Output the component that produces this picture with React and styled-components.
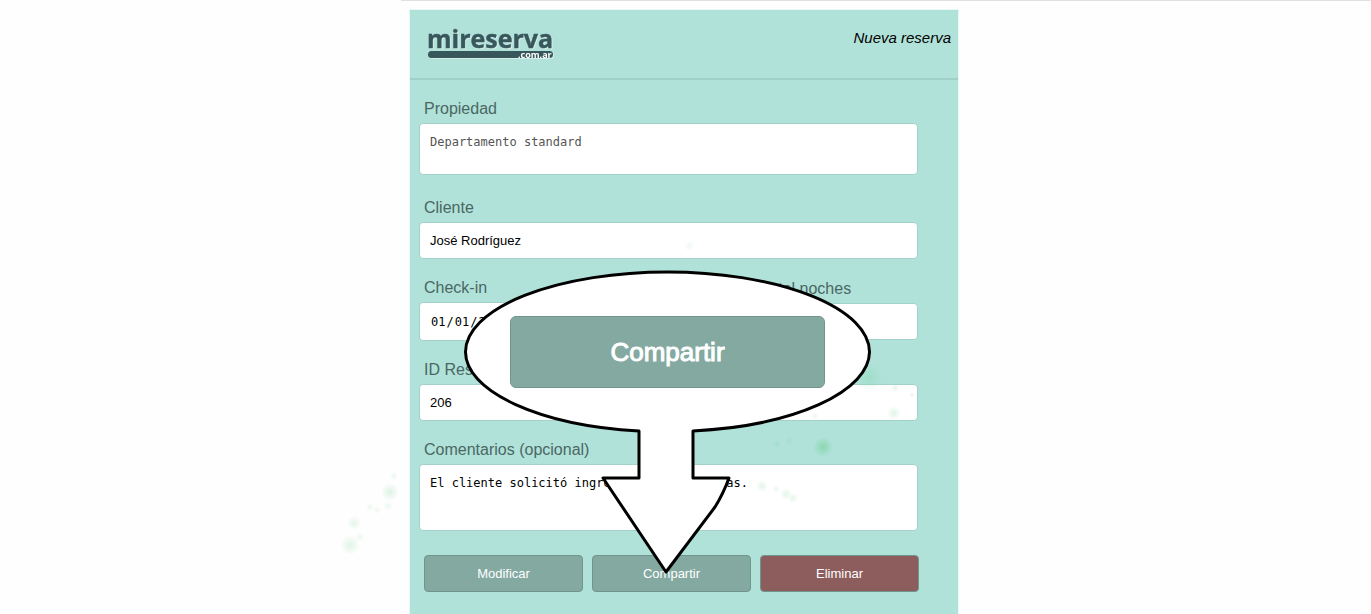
import React, { Component } from 'react';
import styled, { createGlobalStyle, css } from 'styled-components';

const GlobalStyle = createGlobalStyle`
    body {
        margin: 0;
        background: #fefefe;
        font-family: "Liberation Sans", Arial, sans-serif;
    }

    * {
        box-sizing: border-box;
    }
`

let Page = styled.div`
    display: flex;
    flex-direction: column;
    align-items: center;
    min-height: 100vh;
    padding-right: 3px;
`

let TopRule = styled.div`
    align-self: flex-end;
    width: calc(50% + 286px);
    height: 1px;
    margin-right: -3px;
    margin-bottom: 9px;
    background: #e0e0e0;
`

let Panel = styled.main`
    position: relative;
    flex: 1;
    width: 100%;
    max-width: 548px;
    background: #b0e2da;
    box-shadow: 0 0 0 1px #e8f8f4;
`

let Header = styled.header`
    display: flex;
    justify-content: space-between;
    height: 70px;
    padding: 14px 7px 0 16px;
    border-bottom: 2px solid #a0d0c8;
`

let Heading = styled.h1`
    margin: 4px 0 0;
    font-size: 15px;
    line-height: 20px;
    font-weight: normal;
    font-style: italic;
    color: #000;
`

let LogoMark = styled.svg`
    overflow: visible;
    font-family: "Open Sans", "Noto Sans", sans-serif;
    font-weight: 700;
    filter: drop-shadow(1px 1px 0 #d5eeea);
`

let Form = styled.form`
    display: flex;
    flex-direction: column;
    gap: 19px;
    padding: 19px 40px 22px 9px;
`

let Row = styled.div`
    display: grid;
    grid-template-columns: repeat(3, 1fr);
    align-items: center;
    gap: 7px;
`

let Field = styled.div`
    display: flex;
    flex-direction: column;
    gap: 4px;
    padding-bottom: ${props => props.$spaced ? '4px' : '0'};
`

let Label = styled.label`
    padding-left: 5px;
    font-size: 16px;
    line-height: 20px;
    color: #4b6762;
`

const box = css`
    display: block;
    width: 100%;
    margin: 0;
    padding: 0 10px;
    border: 1px solid #a2d2ca;
    border-radius: 4px;
    outline: none;
    background: #fff;
    color: #000;
`

let Input = styled.input`
    ${box}
    height: 37px;
    font: 13px "Liberation Sans", Arial, sans-serif;
`

let DateInput = styled.input`
    ${box}
    height: 39px;
    font: 12px "DejaVu Sans Mono", monospace;
`

let TextArea = styled.textarea`
    ${box}
    height: ${props => props.$tall ? '67px' : '52px'};
    padding-top: 10px;
    resize: none;
    overflow: hidden;
    font: 12px/16px "DejaVu Sans Mono", monospace;
    color: ${props => props.$muted ? '#555' : '#000'};
`

let Actions = styled.div`
    display: grid;
    grid-template-columns: repeat(3, 1fr);
    gap: 9px;
    margin: 5px -1px 0 5px;
`

let Button = styled.button`
    height: 37px;
    padding: 0;
    border: 1px solid #6f958d;
    border-radius: 4px;
    background: ${props => props.$danger ? '#8d5d5d' : '#83a9a1'};
    color: #fff;
    font: 13px "Liberation Sans", Arial, sans-serif;
`

/* balloon pointing at the share button */
let Callout = styled.div`
    position: absolute;
    top: 260px;
    left: 53px;
    width: 410px;
    height: 306px;
`

let BigButton = styled(Button)`
    position: absolute;
    top: 46px;
    left: 47px;
    width: 315px;
    height: 72px;
    border-radius: 6px;
    font-size: 26px;
    -webkit-text-stroke: 1px #fff;
`

let Balloon = styled.svg`
    display: block;
`

let Splashes = styled.svg`
    position: absolute;
    top: 0;
    left: -80px;
    pointer-events: none;
`

const splashes = [
  // x, y, radius, opacity
  [20, 535, 10, 0.2],
  [30, 527, 5, 0.12],
  [24, 513, 7, 0.18],
  [40, 497, 4, 0.12],
  [47, 500, 4, 0.12],
  [60, 482, 9, 0.22],
  [58, 496, 5, 0.12],
  [64, 466, 4, 0.14],
  [359, 236, 5, 0.12],
  [539, 367, 14, 0.22],
  [493, 437, 10, 0.5],
  [447, 434, 4, 0.2],
  [459, 431, 5, 0.15],
  [564, 403, 7, 0.2],
  [565, 378, 4, 0.2],
  [582, 385, 3, 0.15],
  [485, 406, 4, 0.15],
  [432, 476, 6, 0.18],
  [446, 479, 4, 0.15],
  [456, 484, 6, 0.18],
  [463, 488, 5, 0.18],
];

function Logo() {
  return (
    <LogoMark width="130" height="38" viewBox="0 0 130 38" role="img" aria-label="mireserva.com.ar">
      <text x="1" y="24" fontSize="25" fill="#38575c" stroke="#38575c" strokeWidth="0.4">mireserva</text>
      <rect x="2" y="27" width="125" height="7" rx="3.5" fill="#38575c" />
      <text x="92" y="34" fontSize="9" fill="#fff">.com.ar</text>
    </LogoMark>
  );
}

export default class App extends Component {
  render() {
    return (
      <Page>
        <GlobalStyle />
        <TopRule />
        <Panel>
          <Header>
            <Logo />
            <Heading>Nueva reserva</Heading>
          </Header>
          <Form>
            <Field $spaced>
              <Label htmlFor="propiedad">Propiedad</Label>
              <TextArea id="propiedad" $muted spellCheck={false} defaultValue="Departamento standard" />
            </Field>
            <Field>
              <Label htmlFor="cliente">Cliente</Label>
              <Input id="cliente" defaultValue="José Rodríguez" />
            </Field>
            <Row>
              <Field>
                <Label htmlFor="checkin">Check-in</Label>
                <DateInput id="checkin" type="date" defaultValue="2021-01-01" />
              </Field>
              <Field>
                <Label htmlFor="checkout">Check-out</Label>
                <DateInput id="checkout" type="date" />
              </Field>
              <Field>
                <Label htmlFor="noches">Total noches</Label>
                <Input id="noches" />
              </Field>
            </Row>
            <Field>
              <Label htmlFor="reserva">ID Reserva</Label>
              <Input id="reserva" defaultValue="206" />
            </Field>
            <Field>
              <Label htmlFor="comentarios">Comentarios (opcional)</Label>
              <TextArea
                id="comentarios"
                $tall
                spellCheck={false}
                defaultValue="El cliente solicitó ingresar a las 12 horas."
              />
            </Field>
            <Actions>
              <Button type="button">Modificar</Button>
              <Button type="button">Compartir</Button>
              <Button type="button" $danger>Eliminar</Button>
            </Actions>
          </Form>
          <Splashes width="680" height="560" aria-hidden="true">
            <defs>
              <radialGradient id="splash">
                <stop offset="0" stopColor="#66cc85" />
                <stop offset="1" stopColor="#66cc85" stopOpacity="0" />
              </radialGradient>
            </defs>
            {splashes.map(([x, y, r, o]) => (
              <circle key={x + '-' + y} cx={x} cy={y} r={r} fill="url(#splash)" opacity={o} />))}
          </Splashes>
          <Callout>
            <Balloon width="410" height="306" viewBox="0 0 410 306" aria-hidden="true">
              <path
                d="M176 161 A202 80 0 0 1 2.500 82 A202 80 0 0 1 204.500 2 A202 80 0 0 1 406.500 82 A202 80 0 0 1 230 161 V208 H266 C262 219 257 229 252 237 L203 302 L140 208 H176 Z"
                fill="#fff"
                stroke="#000"
                strokeWidth="3"
                strokeLinejoin="round"
              />
            </Balloon>
            <BigButton type="button">Compartir</BigButton>
          </Callout>
        </Panel>
      </Page>
    );
  }
}
